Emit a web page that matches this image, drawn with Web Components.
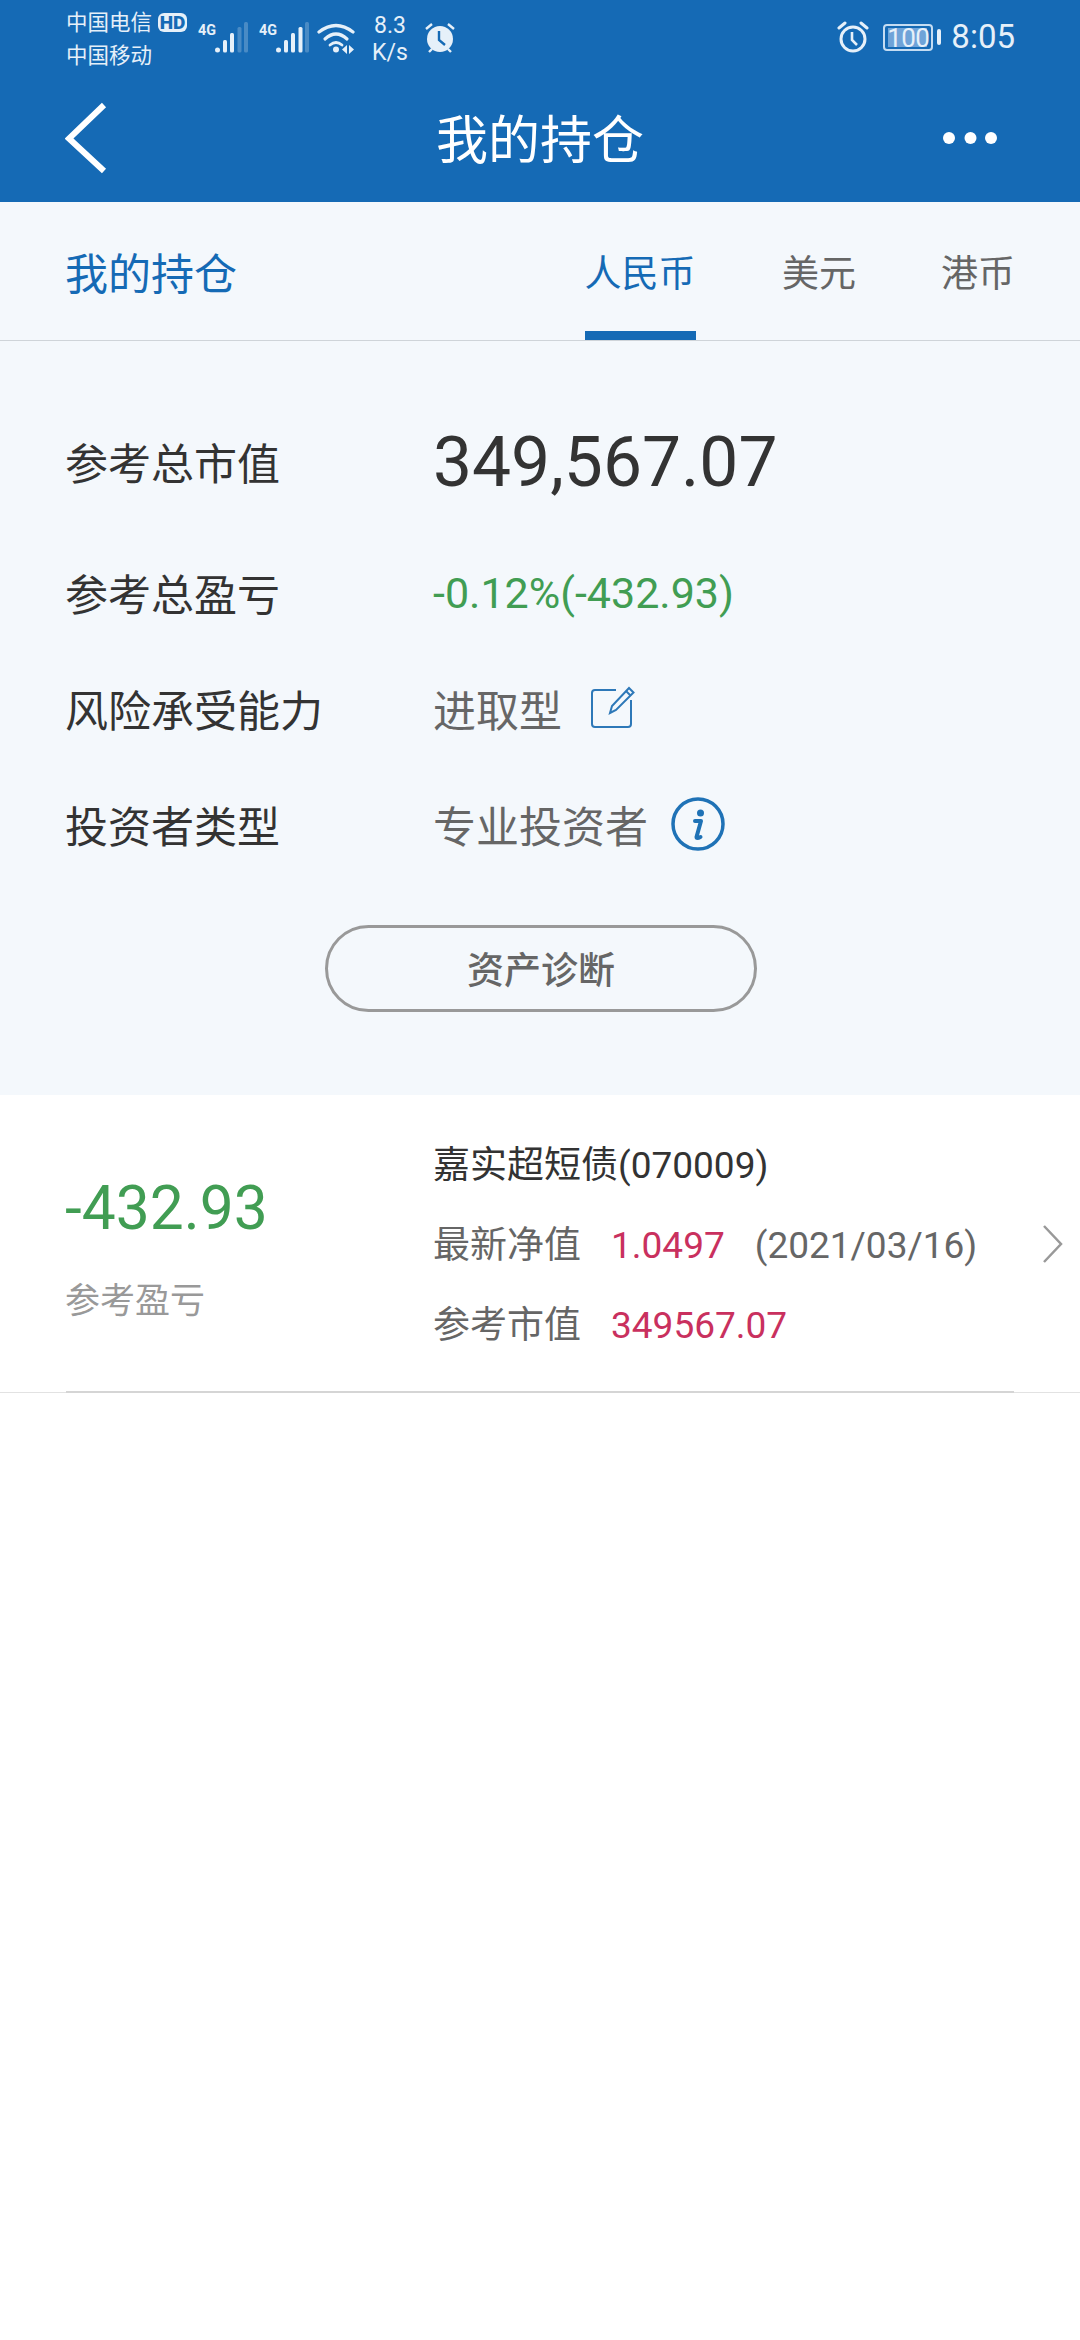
<!DOCTYPE html>
<html lang="zh-CN"><head><meta charset="utf-8"><style>
html,body{margin:0;padding:0;background:#fff;font-family:Roboto,"Noto Sans CJK SC",sans-serif}
body{width:1080px;height:2340px;overflow:hidden}
</style></head><body>
<app-header></app-header>
<tab-bar></tab-bar>
<summary-panel></summary-panel>
<holding-row></holding-row>
<script>
const F='Roboto,"Noto Sans CJK SC",sans-serif';
function def(name,html){customElements.define(name,class extends HTMLElement{constructor(){super();this.attachShadow({mode:'open'}).innerHTML=html;}});}
const sig=(o)=>`<svg width="50" height="32" viewBox="0 0 50 32" fill="#e6f0f9"><text x="0" y="12.500" font-family="Roboto" font-weight="700" font-size="15.500" textLength="18" lengthAdjust="spacingAndGlyphs">4G</text><circle cx="19.500" cy="28" r="2.500"/><rect x="25" y="18" width="4" height="12.500" rx="1.500"/><rect x="32" y="11" width="4" height="19.500" rx="1.500"/><rect x="39.500" y="5" width="4" height="25.500" rx="1.500" opacity="${o}"/><rect x="46" y="0" width="4" height="30.500" rx="1.500" opacity=".25"/></svg>`;
def('status-bar',`<style>
:host{display:flex;height:72px;padding:0 65px 0 66px;color:#e6f0f9;font-family:${F};align-items:flex-start;position:relative}
.car{font-size:21.500px;line-height:33px;width:132px;padding-top:6px;white-space:nowrap}
.hd{display:inline-block;box-sizing:border-box;background:#e6f0f9;color:#156ab5;font-weight:900;font-size:19px;line-height:19px;height:19px;border-radius:6px;vertical-align:1px;margin-left:6px;width:29px;text-align:center}
.l{display:flex;align-items:flex-start}
.sig{display:flex;gap:11px;margin:22px 0 0 0}
.speed{font-size:23px;line-height:27px;text-align:center;margin:12px 0 0 17px;width:36px}
.end{margin-left:auto;display:flex;align-items:center;margin-top:19px}
.bat{box-sizing:border-box;width:50px;height:27px;border:2px solid #c4dcf2;border-radius:4px;font-size:26px;line-height:24px;text-align:center;background:linear-gradient(#6fa3d8,#6fa3d8) no-repeat 3px 2px/39px 19px;letter-spacing:-.6px}
.nub{width:4px;height:16px;background:#e6f0f9;border-radius:2px;margin:0 10px 0 4px}
.time{font-size:33px;line-height:36px}
</style>
<div class="l"><div class="car">中国电信<span class="hd">HD</span><br>中国移动</div>
<div class="sig">${sig('.25')}${sig('1')}</div>
<svg style="margin:22px 0 0 8px" width="38" height="32" viewBox="0 0 38 32" fill="none" stroke="#e6f0f9" stroke-width="3.200" stroke-linecap="round"><path d="M2 10Q19-3 36 10"/><path d="M8 17Q19 7 30 17"/><path d="M13 23Q19 18 25 23" stroke-width="2.800"/><circle cx="19" cy="27.500" r="3" fill="#e6f0f9" stroke="none"/><path d="M30 23l-5 4.500 5 4.500zM32 23l5 4.500-5 4.500z" fill="#e6f0f9" stroke="none"/></svg>
<div class="speed">8.3<br>K/s</div>
<svg style="margin:22px 0 0 17px" width="30" height="31" viewBox="0 0 30 31"><circle cx="15" cy="17" r="13" fill="#e6f0f9"/><path d="M1 7l6-5M29 7l-6-5M4 30l3-3M26 30l-3-3" stroke="#e6f0f9" stroke-width="2.400"/><path d="M14 9v9l6 5" fill="none" stroke="#156ab5" stroke-width="2.400"/></svg>
</div>
<div class="end">
<svg style="margin-right:14px" width="32" height="32" viewBox="0 0 32 32" fill="none" stroke="#e6f0f9" stroke-width="3"><circle cx="16" cy="18" r="12"/><path d="M15 11v8l5 5" stroke-width="2.600"/><path d="M2 7l6-5M30 7l-6-5" stroke-linecap="round"/></svg>
<div class="bat">100</div><div class="nub"></div><div class="time">8:05</div>
</div>`);
def('app-header',`<style>
:host{display:block;background:#156ab5;height:202px;font-family:${F};color:#fff}
.bar{display:flex;align-items:center;justify-content:center;height:130px;position:relative}
h1{margin:0;font-weight:400;font-size:52px;line-height:60px;padding-top:10px}
.back{position:absolute;left:65px;top:30px}
.more{position:absolute;left:942px;top:59px}
</style><status-bar></status-bar>
<div class="bar">
<svg class="back" width="44" height="72" viewBox="0 0 44 72"><path d="M39 3L4 36.500L39 69" fill="none" stroke="#fff" stroke-width="6"/></svg>
<h1>我的持仓</h1>
<svg class="more" width="60" height="14" viewBox="0 0 60 14" fill="#fff"><circle cx="7" cy="7" r="6"/><circle cx="28.500" cy="7" r="6"/><circle cx="49" cy="7" r="6"/></svg>
</div>`);
def('tab-item',`<style>
:host{display:flex;align-items:center;height:138px;box-sizing:border-box;font-size:37px;color:#666;position:relative;white-space:nowrap}
:host([active]){color:#156ab5;margin-right:1.500px}
:host([active])::after{content:"";position:absolute;left:0;right:0;bottom:0;height:9px;background:#156ab5}
</style><slot></slot>`);
def('tab-bar',`<style>
:host{display:flex;align-items:center;background:#f4f8fc;height:139px;box-sizing:border-box;border-bottom:1px solid #cfd4d9;padding:0 65px;font-family:${F}}
.t{font-size:43px;color:#156ab5;margin-right:auto}
.g{display:flex;gap:85px}
</style><div class="t">我的持仓</div><div class="g"><tab-item active>人民币</tab-item><tab-item>美元</tab-item><tab-item>港币</tab-item></div>`);
def('info-row',`<style>
:host{display:flex;align-items:center;font-family:${F}}
.k{width:368px;font-size:43px;color:#333;white-space:nowrap}
.v{display:flex;align-items:center;font-size:43px;color:#666;white-space:nowrap}
</style><div class="k"><slot name="k"></slot></div><div class="v"><slot></slot></div>`);
def('summary-panel',`<style>
:host{display:block;background:#f4f8fc;height:754px;box-sizing:border-box;padding:80px 66px 0 65px;font-family:${F}}
info-row{height:60px}
.big{font-size:69.500px;color:#333;line-height:80px;padding-top:4px}
.gr{color:#419d53;font-size:43px;padding-top:2px}
.btn{box-sizing:border-box;width:432px;height:87px;margin-left:260px;border:3px solid #999;border-radius:44px;display:flex;align-items:center;justify-content:center;font-size:37px;font-weight:500;color:#666;padding-bottom:2px}
</style>
<info-row style="height:80px"><span slot="k">参考总市值</span><span class="big">349,567.07</span></info-row>
<info-row style="margin-top:61px"><span slot="k">参考总盈亏</span><span class="gr">-0.12%(-432.93)</span></info-row>
<info-row style="margin-top:56px"><span slot="k">风险承受能力</span>进取型<svg style="margin-left:28px" width="46" height="44" viewBox="0 0 46 44" fill="none" stroke="#2d78b8" stroke-width="2"><path d="M26 4H5a3 3 0 0 0-3 3v31a3 3 0 0 0 3 3h33a3 3 0 0 0 3-3V14"/><path d="M20 27l2-7L39 2l4.500 4.500L26 24z"/><path d="M36 5l4.500 4.500"/></svg></info-row>
<info-row style="margin-top:56px"><span slot="k">投资者类型</span>专业投资者<svg style="margin-left:23px" width="54" height="54" viewBox="0 0 54 54"><circle cx="27" cy="27" r="25" fill="none" stroke="#1f72b6" stroke-width="3.500"/><circle cx="29.500" cy="16" r="3.500" fill="#1f72b6"/><path d="M24 24h6l-4.500 16q0 2 4 0" fill="none" stroke="#1f72b6" stroke-width="4" stroke-linecap="round" stroke-linejoin="round"/></svg></info-row>
<div class="btn" style="margin-top:71px">资产诊断</div>`);
def('holding-row',`<style>
:host{display:block;height:298px;box-sizing:border-box;font-family:${F};position:relative;background:#fff;border-bottom:1px solid #e2e2e2}
.in{display:flex;height:296px;padding-left:65px}
.l{width:368px;padding-top:79px}
.n{font-size:60.500px;line-height:70px;color:#419d53}
.s{font-size:35px;line-height:40px;color:#999;margin-top:38px}
.r{padding-top:44px;color:#666;font-size:37px}
.r div{height:54px;line-height:54px;margin-bottom:26px;white-space:nowrap}
.r .ti{color:#333;margin-bottom:26px}
.p{color:#c9305e;margin-left:30px}
.d{margin-left:30px}
.line{position:absolute;left:66px;right:66px;top:296px;height:2px;background:#d5d5d5}
svg{position:absolute;left:1041px;top:129px}
</style><div class="in"><div class="l"><div class="n">-432.93</div><div class="s">参考盈亏</div></div>
<div class="r"><div class="ti">嘉实超短债(070009)</div><div>最新净值<span class="p">1.0497</span><span class="d">(2021/03/16)</span></div><div>参考市值<span class="p">349567.07</span></div></div></div>
<svg width="24" height="40" viewBox="0 0 24 40"><path d="M3 2l17 18L3 38" fill="none" stroke="#999" stroke-width="2.500"/></svg><div class="line"></div>`);
</script></body></html>
